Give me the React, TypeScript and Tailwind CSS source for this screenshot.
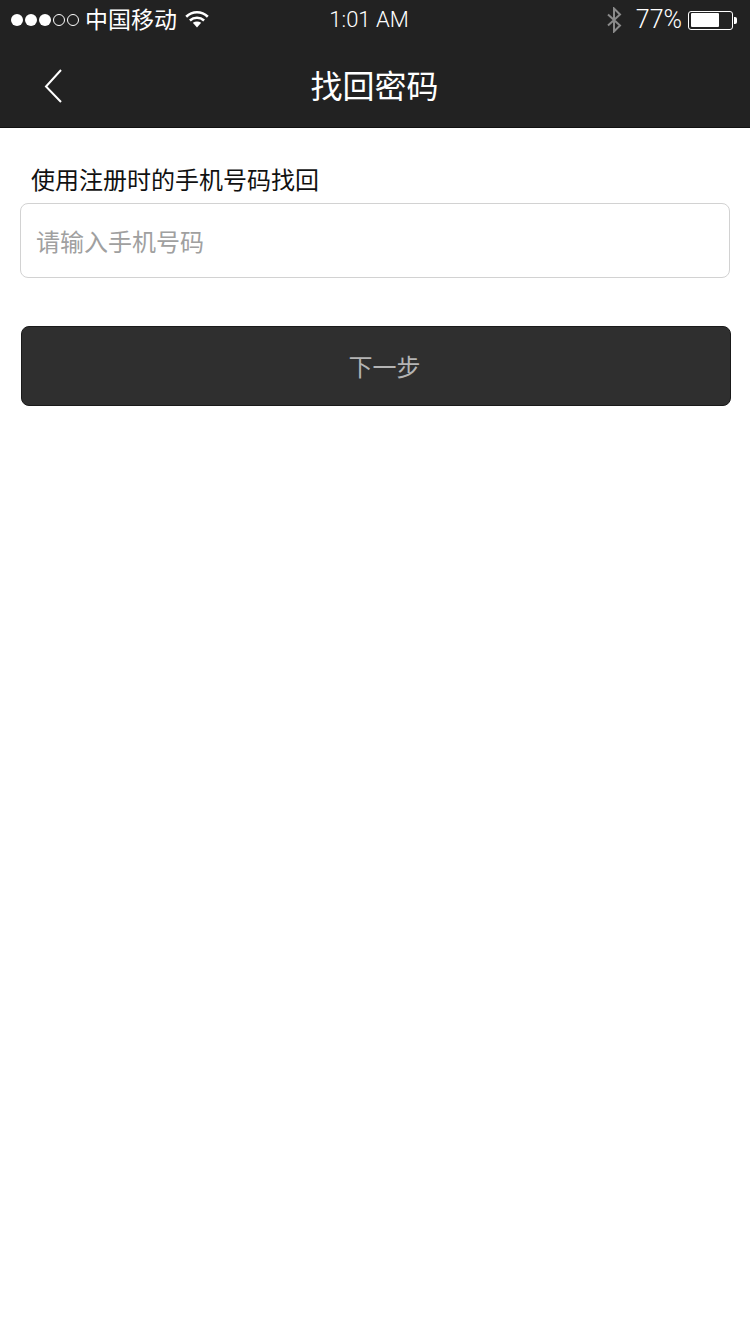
const font = "font-['Noto_Sans_CJK_SC','Noto_Sans',sans-serif]";

function Wifi() {
  return (
    <svg width="24" height="18" viewBox="0 0 24 18" fill="none" className="ml-[8px] mt-[-3px]">
      <path d="M1.2 6.8C7.5 0.8 16.5 0.8 22.8 6.8" stroke="white" strokeWidth="2.6" />
      <path d="M4.9 10.4C9 6.8 15 6.8 19.1 10.4" stroke="white" strokeWidth="2.6" />
      <path d="M7.8 12.8C10.5 11.2 13.5 11.2 16.2 12.8L12 17.4Z" fill="white" />
    </svg>
  );
}

function Bluetooth() {
  return (
    <svg width="18" height="26" viewBox="0 0 18 26" fill="none">
      <path d="M3 7.5L15 18.5L9 24.5V1.5L15 7.5L3 18.5" stroke="#8a8a8a" strokeWidth="2" />
    </svg>
  );
}

function Battery() {
  return (
    <div className="flex items-center">
      <div className="w-[45px] h-[19px] rounded-[3px] border border-white p-[1.5px]">
        <div className="h-full w-[28px] rounded-[1px] bg-white" />
      </div>
      <div className="ml-[1px] w-[3px] h-[7px] rounded-r-[2px] bg-white" />
    </div>
  );
}

function Dot({ on }: { on: boolean }) {
  return (
    <div className={on ? "w-[12px] h-[12px] rounded-full bg-white" : "w-[12px] h-[12px] rounded-full border border-white"} />
  );
}

export default function App() {
  return (
    <div className={`w-[750px] h-[1334px] bg-white flex flex-col ${font}`}>
      <header className="h-[128px] bg-[#222222] border-b border-[#111111] flex flex-col">
        <div className="h-[40px] flex items-center justify-between pl-[11px] pr-[13px] text-white">
          <div className="flex items-center w-[250px]">
            <div className="flex gap-[2px]">
              <Dot on /><Dot on /><Dot on /><Dot on={false} /><Dot on={false} />
            </div>
            <span className="ml-[6px] mt-[-4px] text-[23px] leading-[40px]">中国移动</span>
            <Wifi />
          </div>
          <span className="text-[22px] leading-[40px] font-light font-['Roboto',sans-serif] ml-[-10px] mt-[-1px]">1:01 AM</span>
          <div className="flex items-center justify-end w-[250px]">
            <Bluetooth />
            <span className="ml-[13px] mr-[6px] text-[25px] leading-[40px] font-light font-['Roboto',sans-serif]">77%</span>
            <Battery />
          </div>
        </div>
        <div className="relative flex-1 flex items-center justify-center">
          <svg width="20" height="36" viewBox="0 0 20 36" fill="none" className="absolute left-[44px] top-[28px]">
            <path d="M17 2L2 18.5L17 34" stroke="white" strokeWidth="2" />
          </svg>
          <h1 className="text-[32px] leading-[40px] text-white ml-[-1px]">找回密码</h1>
        </div>
      </header>
      <main className="flex flex-col">
        <p className="mt-[34px] ml-[31px] text-[24px] leading-[34px] text-[#111111]">使用注册时的手机号码找回</p>
        <div className="mt-[7px] ml-[20px] w-[710px] h-[75px] rounded-[8px] border border-[#d2d2d2] flex items-center pl-[15px] text-[24px] text-[#a0a0a0]">
          请输入手机号码
        </div>
        <button className="mt-[48px] ml-[21px] w-[710px] h-[80px] rounded-[8px] bg-[#2f2f2f] border border-[#1a1a1a] pl-[17px] text-[24px] text-[#b4b4b4]">
          下一步
        </button>
      </main>
    </div>
  );
}
